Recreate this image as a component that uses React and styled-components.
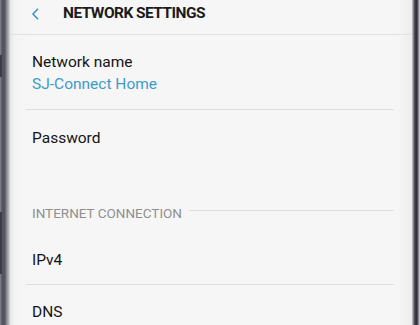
import React from 'react';
import styled, { createGlobalStyle } from 'styled-components';

const GlobalStyle = createGlobalStyle`
  html, body {
    margin: 0;
    padding: 0;
    background: #ffffff;
    overflow: hidden;
  }
  body {
    font-family: Roboto, "Liberation Sans", sans-serif;
  }
`;

const Phone = styled.div`
  display: flex;
  width: 420px;
  height: 325px;
  overflow: hidden;
`;

const LeftBezel = styled.div`
  position: relative;
  width: 10px;
  flex-shrink: 0;
  background: linear-gradient(
    to right,
    #8c8c92 0px,
    #6a6a74 1px,
    #55555f 2px,
    #55555f 5px,
    #7c7c86 6px,
    #a6a6ae 8px,
    #d4d4d8 10px
  );
`;

const SideButton = styled.div`
  position: absolute;
  left: 0;
  top: ${(p) => p.top}px;
  width: 2px;
  height: ${(p) => p.h}px;
  background: #3c3c44;
`;

const RightBezel = styled.div`
  width: 8px;
  flex-shrink: 0;
  background: linear-gradient(
    to right,
    #c8c8ce 0px,
    #9a9aa4 1px,
    #3a3a46 3px,
    #2e2e38 5px,
    #6a6a72 6px,
    #d8d8dc 8px
  );
`;

const Screen = styled.div`
  flex: 1;
  display: flex;
  flex-direction: column;
  background: linear-gradient(
    to right,
    #e6e6e8 0px,
    #f4f4f4 5px,
    #f6f6f6 20px,
    #f6f6f6 calc(100% - 14px),
    #ececee 100%
  );
`;

const Header = styled.div`
  height: 35px;
  display: flex;
  align-items: flex-start;
  padding-top: 4px;
  box-sizing: border-box;
  border-bottom: 1px solid #e2e2e2;
`;

const Back = styled.div`
  width: 53px;
  display: flex;
  justify-content: flex-start;
  padding-left: 21px;
  padding-top: 4px;
  box-sizing: border-box;
`;

const Title = styled.div`
  font-family: Roboto, "Liberation Sans", sans-serif;
  font-weight: 700;
  font-size: 15.5px;
  line-height: 18px;
  color: #1b1b1b;
  letter-spacing: -0.55px;
`;

const Row = styled.div`
  padding: ${(p) => p.pt}px 22px ${(p) => p.pb || 0}px 22px;
  display: flex;
  flex-direction: column;
`;

const Label = styled.div`
  font-size: 15.5px;
  line-height: 22px;
  color: ${(p) => (p.accent ? '#3d9cc7' : '#141414')};
`;

const Divider = styled.div`
  height: 1px;
  margin: 0 18px 0 16px;
  background: #dedede;
`;

const Section = styled.div`
  display: flex;
  align-items: center;
  gap: 7px;
  margin: 54px 18px 0 22px;
  height: 20px;
`;

const SectionLabel = styled.div`
  font-size: 13.5px;
  line-height: 20px;
  color: #8f8f8f;
  white-space: nowrap;
`;

const SectionLine = styled.div`
  flex: 1;
  height: 1px;
  margin-top: -6px;
  background: #dcdcdc;
`;

export default function App() {
  return (
    <>
      <GlobalStyle />
      <Phone>
        <LeftBezel>
          <SideButton top={55} h={22} />
          <SideButton top={212} h={62} />
        </LeftBezel>
        <Screen>
          <Header>
            <Back>
              <svg width="9" height="12" viewBox="0 0 9 12">
                <path d="M7 0.8 L2 6 L7 11.2" fill="none" stroke="#3d8fc8" strokeWidth="1.5" />
              </svg>
            </Back>
            <Title>NETWORK SETTINGS</Title>
          </Header>
          <Row pt={16} pb={14}>
            <Label>Network name</Label>
            <Label accent>SJ-Connect Home</Label>
          </Row>
          <Divider />
          <Row pt={17}>
            <Label>Password</Label>
          </Row>
          <Section>
            <SectionLabel>INTERNET CONNECTION</SectionLabel>
            <SectionLine />
          </Section>
          <Row pt={26} pb={13}>
            <Label>IPv4</Label>
          </Row>
          <Divider />
          <Row pt={16}>
            <Label>DNS</Label>
          </Row>
        </Screen>
        <RightBezel />
      </Phone>
    </>
  );
}
